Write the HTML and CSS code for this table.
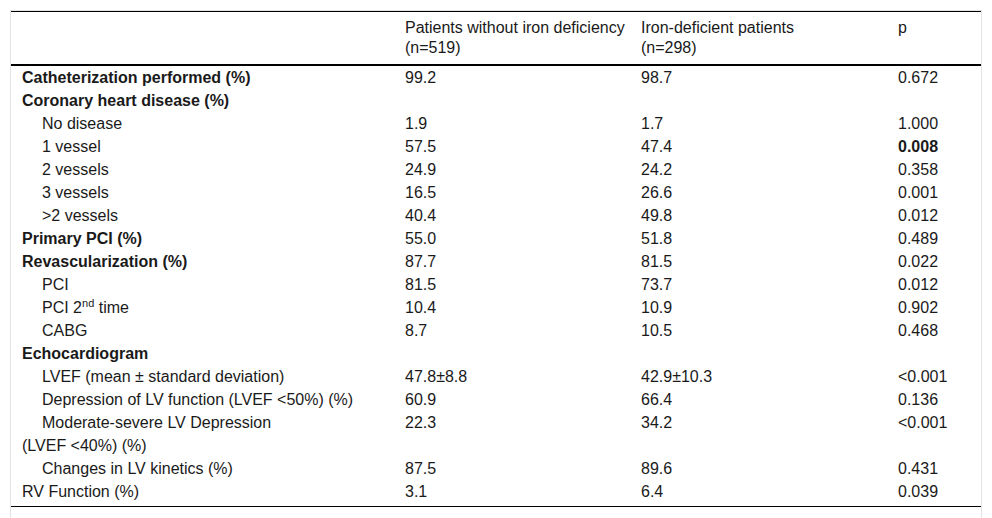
FILE: index.html
```html
<!DOCTYPE html>
<html>
<head>
<meta charset="utf-8">
<link rel="stylesheet" href="styles.css">
</head>
<body>
<div class="frame">
<table class="data">
<colgroup>
<col class="c1"><col class="c2"><col class="c3"><col class="c4">
</colgroup>
<thead>
<tr><th></th><th>Patients without iron deficiency<br>(n=519)</th><th>Iron-deficient patients<br>(n=298)</th><th>p</th></tr>
</thead>
<tbody>
<tr><td class="b">Catheterization performed (%)</td><td>99.2</td><td>98.7</td><td>0.672</td></tr>
<tr><td class="b">Coronary heart disease (%)</td><td></td><td></td><td></td></tr>
<tr><td class="in">No disease</td><td>1.9</td><td>1.7</td><td>1.000</td></tr>
<tr><td class="in">1 vessel</td><td>57.5</td><td>47.4</td><td class="b">0.008</td></tr>
<tr><td class="in">2 vessels</td><td>24.9</td><td>24.2</td><td>0.358</td></tr>
<tr><td class="in">3 vessels</td><td>16.5</td><td>26.6</td><td>0.001</td></tr>
<tr><td class="in">&gt;2 vessels</td><td>40.4</td><td>49.8</td><td>0.012</td></tr>
<tr><td class="b">Primary PCI (%)</td><td>55.0</td><td>51.8</td><td>0.489</td></tr>
<tr><td class="b">Revascularization (%)</td><td>87.7</td><td>81.5</td><td>0.022</td></tr>
<tr><td class="in">PCI</td><td>81.5</td><td>73.7</td><td>0.012</td></tr>
<tr><td class="in">PCI 2<sup>nd</sup> time</td><td>10.4</td><td>10.9</td><td>0.902</td></tr>
<tr><td class="in">CABG</td><td>8.7</td><td>10.5</td><td>0.468</td></tr>
<tr><td class="b">Echocardiogram</td><td></td><td></td><td></td></tr>
<tr><td class="in">LVEF (mean ± standard deviation)</td><td>47.8±8.8</td><td>42.9±10.3</td><td>&lt;0.001</td></tr>
<tr><td class="in">Depression of LV function (LVEF &lt;50%) (%)</td><td>60.9</td><td>66.4</td><td>0.136</td></tr>
<tr><td class="in">Moderate-severe LV Depression<br>(LVEF &lt;40%) (%)</td><td>22.3</td><td>34.2</td><td>&lt;0.001</td></tr>
<tr><td class="in">Changes in LV kinetics (%)</td><td>87.5</td><td>89.6</td><td>0.431</td></tr>
<tr class="last"><td>RV Function (%)</td><td>3.1</td><td>6.4</td><td>0.039</td></tr>
</tbody>
</table>
</div>
</body>
</html>
```
FILE: styles.css
```css
html, body {
  margin: 0;
  padding: 0;
  background: #fff;
}
body {
  font-family: "Liberation Sans", Arial, sans-serif;
  font-size: 16px;
  color: #1a1a1a;
}
.frame {
  margin: 10px 10px 0 10px;
  border: 1px solid #e3e3e3;
  padding-bottom: 20px;
}
.data {
  width: 100%;
  border-collapse: collapse;
  table-layout: fixed;
  border-top: 1px solid #000;
  border-bottom: 1px solid #000;
}
.c1 { width: 383px; }
.c2 { width: 236px; }
.c3 { width: 257px; }
.c4 { width: 94px; }
.data th {
  font-weight: normal;
  text-align: left;
  vertical-align: top;
  line-height: 20px;
  padding: 6px 0 6px 11px;
  white-space: nowrap;
  border-bottom: 2px solid #000;
}
.data td {
  text-align: left;
  vertical-align: top;
  line-height: 23px;
  padding: 0 0 0 11px;
}
.data td.b {
  font-weight: bold;
}
.data td.in {
  text-indent: 20px;
}
.data tr.last td {
  padding-bottom: 3px;
}
sup {
  font-size: 11px;
  line-height: 0;
  vertical-align: 6px;
}
```
